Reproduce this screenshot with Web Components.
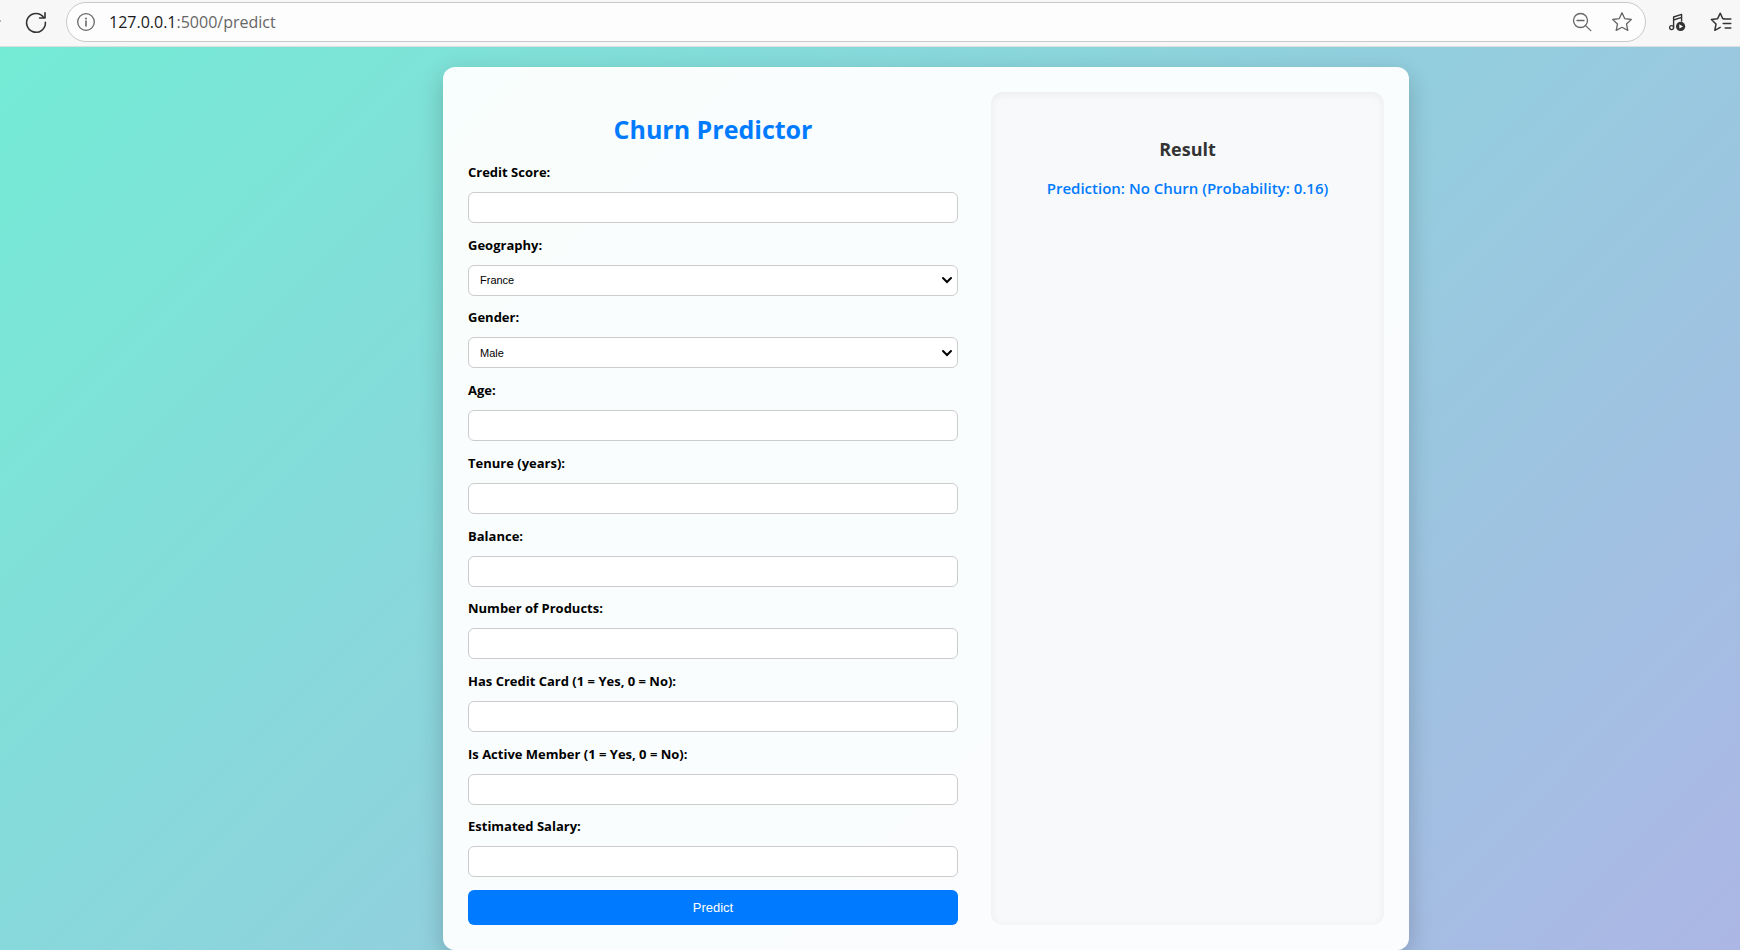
<!DOCTYPE html>
<html lang="en">
<head>
<meta charset="utf-8">
<title>Churn Predictor</title>
<style>
  body { margin: 0; font-family: "Open Sans", "Noto Sans", sans-serif; }
</style>
</head>
<body>
<app-shell></app-shell>
<script>
class BaseElement extends HTMLElement {
  render(markup) {
    this.attachShadow({ mode: 'open' }).innerHTML = markup;
  }
}

const ICONS = {
  back: '<path d="M4 13H22M11 6L4 13L11 20"/>',
  reload: '<path d="M21.8 9.6A9.4 9.4 0 1 0 23.4 14.4M23 4.8V10H17.6" stroke-width="1.6"/>',
  info: '<circle cx="14" cy="14" r="8.3"/><path d="M14 13V18" stroke-width="1.6"/><circle cx="14" cy="10.4" r="1" fill="currentColor" stroke="none"/>',
  zoom: '<circle cx="12.5" cy="12.5" r="7"/><path d="M9 12.5H16M17.6 17.6L22.8 22.6"/>',
  star: '<path d="M14 4.8L16.8 10.7L23.3 11.5L18.5 16L19.8 22.4L14 19.3L8.2 22.4L9.5 16L4.7 11.5L11.2 10.7Z"/>',
  music: '<circle cx="9.6" cy="19.6" r="2"/><path d="M11.6 19.6V9L19.6 6.4V13M11.6 12L19.6 9.4" stroke-width="1.4"/><circle cx="18.6" cy="18.4" r="4.6" fill="currentColor" stroke="none"/><path d="M17.3 16.2L21 18.4L17.3 20.6Z" fill="#fff" stroke="none"/>',
  favorites: '<path d="M18.2 10.8H16.8L14.3 5.2L11.6 10.7L5.4 11.5L10 16L8.8 22.3L14.2 19.4M17.8 11H24.8M17.2 15.4H24.8M19.2 20H24.8" stroke-width="1.5"/>'
};

class ToolButton extends BaseElement {
  connectedCallback() {
    this.render(`
      <style>
        :host { display: block; flex: none; color: #333; }
        button { display: block; padding: 0; border: 0; background: none; color: inherit; }
        svg { display: block; width: 28px; height: 28px; fill: none; stroke: currentColor;
              stroke-width: 1.3; stroke-linecap: round; stroke-linejoin: round; }
      </style>
      <button type="button" aria-label="${this.getAttribute('label')}">
        <svg viewBox="0 0 28 28" aria-hidden="true">${ICONS[this.getAttribute('icon')]}</svg>
      </button>`);
  }
}
customElements.define('tool-button', ToolButton);

class BrowserBar extends BaseElement {
  connectedCallback() {
    this.render(`
      <style>
        :host { display: flex; align-items: center; gap: 16px; padding: 2px 6px 4px 0;
                background: #f7f7f7; border-bottom: 1px solid #dcdfde; overflow: hidden; }
        .back { margin-left: -22px; }
        .address { flex: 1; display: flex; align-items: center; height: 38px; padding: 0 9px 0 5px;
                   background: #fdfdfd; border: 1px solid #c8c8c8; border-radius: 20px; }
        .address tool-button { color: #666; }
        .url { flex: 1; margin-left: 9px; font-size: 16px; line-height: 24px; color: #666; }
        .url b { font-weight: 400; color: #1a1a1a; }
        .tools { display: flex; gap: 12px; }
      </style>
      <tool-button class="back" icon="back" label="Back"></tool-button>
      <tool-button icon="reload" label="Refresh"></tool-button>
      <div class="address">
        <tool-button icon="info" label="Site information"></tool-button>
        <div class="url"><b>127.0.0.1</b>:5000/predict</div>
        <div class="tools">
          <tool-button icon="zoom" label="Zoom out"></tool-button>
          <tool-button icon="star" label="Add to favorites"></tool-button>
        </div>
      </div>
      <tool-button icon="music" label="Media controls"></tool-button>
      <tool-button icon="favorites" label="Favorites"></tool-button>`);
  }
}
customElements.define('browser-bar', BrowserBar);

class FormField extends BaseElement {
  connectedCallback() {
    const options = this.getAttribute('options');
    const control = options
      ? `<select id="control">${options.split(',').map(o => `<option>${o}</option>`).join('')}</select>`
      : '<input id="control" type="text">';
    this.render(`
      <style>
        :host { display: block; flex: 1 0 auto; }
        label { display: block; margin-bottom: 11px; font-size: 13px; line-height: 18px; font-weight: 700; color: #000; }
        input, select { display: block; box-sizing: border-box; width: 100%; height: 31px; padding: 0 11px;
                        font: 11px "Liberation Sans", Arial, sans-serif; color: #000; background: #fff;
                        border: 1px solid #ccc; border-radius: 6px; }
        select { appearance: none;
                 background: #fff url("data:image/svg+xml,%3Csvg xmlns='http://www.w3.org/2000/svg' width='12' height='8'%3E%3Cpath d='M2 2L6 6L10 2' fill='none' stroke='black' stroke-width='2' stroke-linecap='round'/%3E%3C/svg%3E") no-repeat right 4px center; }
      </style>
      <label for="control">${this.getAttribute('label')}</label>
      ${control}`);
  }
}
customElements.define('form-field', FormField);

class ChurnForm extends BaseElement {
  connectedCallback() {
    this.render(`
      <style>
        :host { display: block; }
        form { display: flex; flex-direction: column; height: 100%; }
        h1 { margin: 19px 0 16px; font-size: 25px; line-height: 36px; font-weight: 700; text-align: center; color: #007bff; }
        button { height: 35px; border: 0; border-radius: 6px; background: #007bff; color: #fff;
                 font: 13px "Liberation Sans", Arial, sans-serif; }
      </style>
      <form>
        <h1>Churn Predictor</h1>
        <form-field label="Credit Score:"></form-field>
        <form-field label="Geography:" options="France,Germany,Spain"></form-field>
        <form-field label="Gender:" options="Male,Female"></form-field>
        <form-field label="Age:"></form-field>
        <form-field label="Tenure (years):"></form-field>
        <form-field label="Balance:"></form-field>
        <form-field label="Number of Products:"></form-field>
        <form-field label="Has Credit Card (1 = Yes, 0 = No):"></form-field>
        <form-field label="Is Active Member (1 = Yes, 0 = No):"></form-field>
        <form-field label="Estimated Salary:"></form-field>
        <button type="button">Predict</button>
      </form>`);
  }
}
customElements.define('churn-form', ChurnForm);

class ResultPanel extends BaseElement {
  connectedCallback() {
    this.render(`
      <style>
        :host { display: block; padding: 44px 25px 25px; text-align: center; background: #f8f9fb;
                border-radius: 12px; box-shadow: inset 0 2px 8px rgba(0, 0, 0, 0.06); }
        h2 { margin: 0 0 14px; font-size: 18px; line-height: 26px; font-weight: 700; color: #333; }
        p { margin: 0; font-size: 15px; line-height: 24px; font-weight: 600; color: #007bff; }
      </style>
      <h2>Result</h2>
      <p><slot></slot></p>`);
  }
}
customElements.define('result-panel', ResultPanel);

class AppShell extends BaseElement {
  connectedCallback() {
    this.render(`
      <style>
        :host { display: flex; flex-direction: column; min-height: 100vh; }
        main { flex: 1; display: grid; grid-template-columns: 443fr minmax(auto, 966px) 331fr; padding-top: 20px;
               background: linear-gradient(135deg, #74ebd5, #acb6e5); }
        .card { grid-column: 2; display: grid; grid-template-columns: 490fr 393fr; gap: 33px; padding: 25px;
                background: rgba(255, 255, 255, 0.95); border-radius: 12px; box-shadow: 0 8px 25px rgba(0, 0, 0, 0.2); }
      </style>
      <browser-bar></browser-bar>
      <main>
        <div class="card">
          <churn-form></churn-form>
          <result-panel>Prediction: No Churn (Probability: 0.16)</result-panel>
        </div>
      </main>`);
  }
}
customElements.define('app-shell', AppShell);
</script>
</body>
</html>
